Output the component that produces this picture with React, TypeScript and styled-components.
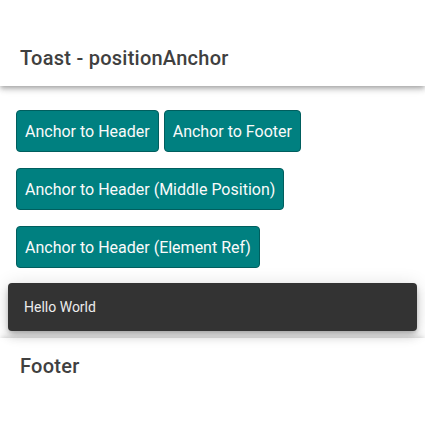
import React from "react";
import styled, { createGlobalStyle } from "styled-components";

const Global = createGlobalStyle`
  html, body { margin: 0; padding: 0; background: #fff; }
  body { font-family: Roboto, "Noto Sans", sans-serif; }
`;

const Page = styled.div`
  position: relative;
  height: 100vh;
  display: flex;
  flex-direction: column;
  overflow: hidden;
`;

const Header = styled.header`
  position: relative;
  z-index: 2;
  padding-top: 30px;
  background: #fff;
  box-shadow: 0 2px 4px -1px rgba(0,0,0,0.2), 0 4px 5px 0 rgba(0,0,0,0.14), 0 1px 10px 0 rgba(0,0,0,0.12);
`;

const Toolbar = styled.div`
  height: 56px;
  display: flex;
  align-items: center;
  padding: 0 20px;
`;

const Title = styled.h1`
  margin: 0;
  font-size: 20px;
  font-weight: 500;
  letter-spacing: 0.0125em;
  color: #404040;
`;

const Content = styled.main`
  flex: 1;
  padding: 24px 16px 0;
  display: flex;
  flex-direction: column;
  gap: 16px;
  align-items: flex-start;
`;

const Row = styled.div`
  display: flex;
  gap: 5px;
`;

const Button = styled.button`
  height: 42px;
  padding: 0 8px;
  background: #008080;
  color: #fafafa;
  border: 1px solid #005e5e;
  border-radius: 4px;
  font-family: Roboto, "Noto Sans", sans-serif;
  font-size: 16px;
  font-weight: 400;
  cursor: pointer;
`;

const Footer = styled.footer`
  position: relative;
  z-index: 1;
  background: #fff;
  padding-bottom: 31px;
  box-shadow: 0 -2px 4px -1px rgba(0,0,0,0.12), 0 -3px 8px 0 rgba(0,0,0,0.06);
`;

const Toast = styled.div`
  position: absolute;
  z-index: 3;
  left: 8px;
  right: 8px;
  top: 283px;
  height: 48px;
  display: flex;
  align-items: center;
  padding: 0 16px;
  box-sizing: border-box;
  background: #333333;
  color: #ececec;
  border-radius: 4px;
  font-size: 14px;
  box-shadow: 0 3px 5px -1px rgba(0,0,0,0.2), 0 6px 10px 0 rgba(0,0,0,0.14), 0 1px 18px 0 rgba(0,0,0,0.12);
`;

export default function App() {
  return (
    <>
      <Global />
      <Page>
        <Header>
          <Toolbar>
            <Title>Toast - positionAnchor</Title>
          </Toolbar>
        </Header>
        <Content>
          <Row>
            <Button>Anchor to Header</Button>
            <Button>Anchor to Footer</Button>
          </Row>
          <Button>Anchor to Header (Middle Position)</Button>
          <Button>Anchor to Header (Element Ref)</Button>
        </Content>
        <Footer>
          <Toolbar>
            <Title>Footer</Title>
          </Toolbar>
        </Footer>
        <Toast>Hello World</Toast>
      </Page>
    </>
  );
}
